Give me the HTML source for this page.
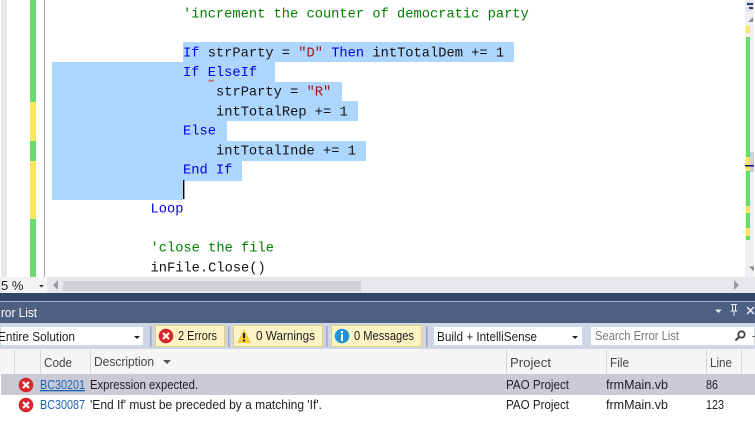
<!DOCTYPE html>
<html><head><meta charset="utf-8"><style>
html,body{margin:0;padding:0;background:#fff;width:755px;height:446px;overflow:hidden}
svg{display:block}
.c{font-family:"Liberation Mono",monospace;font-size:13.72px;white-space:pre}
.k{fill:#0000e6}.g{fill:#008000}.s{fill:#a31515}.t{fill:#111}
.u{font-family:"Liberation Sans",sans-serif;font-size:13px;fill:#1e1e1e}
</style></head><body>
<svg width="755" height="446" viewBox="0 0 755 446" xmlns="http://www.w3.org/2000/svg">
<rect width="755" height="446" fill="#fff"/>
<!-- margin -->
<rect x="1" y="0" width="6" height="277" fill="#e6e6e6"/>
<rect x="30" y="0" width="6" height="102" fill="#66dc6a"/>
<rect x="30" y="102" width="6" height="39" fill="#fde65f"/>
<rect x="30" y="141" width="6" height="20" fill="#66dc6a"/>
<rect x="30" y="161" width="6" height="58" fill="#fde65f"/>
<rect x="30" y="219" width="6" height="58" fill="#66dc6a"/>
<rect x="44" y="0" width="1" height="277" fill="#a5a5a5"/>
<!-- selection -->
<g fill="#add6ff">
<rect x="183" y="42" width="331" height="20"/>
<rect x="52" y="62" width="223" height="20"/>
<rect x="52" y="82" width="290" height="19"/>
<rect x="52" y="101" width="306" height="20"/>
<rect x="52" y="121" width="175" height="20"/>
<rect x="52" y="141" width="314" height="20"/>
<rect x="52" y="161" width="190" height="20"/>
<rect x="52" y="181" width="131" height="19"/>
</g>
<rect x="183" y="180" width="1.4" height="19" fill="#000"/>
<!-- code -->
<text class="c g" x="183" y="17.500">'increment the counter of democratic party</text>
<text class="c" x="183" y="56.500"><tspan class="k">If</tspan><tspan class="t"> strParty = </tspan><tspan class="s">"D"</tspan><tspan class="t"> </tspan><tspan class="k">Then</tspan><tspan class="t"> intTotalDem += 1</tspan></text>
<text class="c k" x="183" y="76">If ElseIf</text>
<path d="M208.5 81.5l1.7-1.5 1.7 1.5 1.7-1.5" fill="none" stroke="#d0483c" stroke-width="1"/>
<text class="c" x="216" y="95.500"><tspan class="t">strParty = </tspan><tspan class="s">"R"</tspan></text>
<text class="c t" x="216" y="115.500">intTotalRep += 1</text>
<text class="c k" x="183" y="134.500">Else</text>
<text class="c t" x="216" y="154.500">intTotalInde += 1</text>
<text class="c k" x="183" y="173.500">End If</text>
<text class="c k" x="150.5" y="212.500">Loop</text>
<text class="c g" x="150.5" y="251.500">'close the file</text>
<text class="c t" x="150.5" y="271.500">inFile.Close()</text>
<!-- right scrollbar -->
<rect x="745" y="0" width="9" height="277" fill="#f0f0f3"/>
<rect x="746" y="1" width="8" height="10" fill="#e0e2ea"/>
<path d="M747 3h6v2h-6zM749 7h4v2h-4z" fill="#2f4368"/>
<path d="M748 22l5-5v5z" fill="#8a8a95"/>
<rect x="746" y="26" width="4" height="7" fill="#fde65f"/>
<rect x="746" y="37" width="4" height="120" fill="#66dc6a"/>
<rect x="750" y="152" width="4" height="20" fill="#d0d1d7"/>
<rect x="746" y="157" width="4" height="14" fill="#fde65f"/>
<rect x="745" y="165" width="9" height="1.500" fill="#10107a"/>
<rect x="746" y="171" width="4" height="35" fill="#66dc6a"/>
<rect x="746" y="206" width="4" height="7" fill="#fde65f"/>
<rect x="746" y="213" width="4" height="15" fill="#66dc6a"/>
<rect x="746" y="228" width="4" height="8" fill="#fde65f"/>
<rect x="746" y="236" width="4" height="4" fill="#66dc6a"/>
<path d="M749 266.5h5v5z" fill="#8a8a95"/>
<!-- bottom scrollbar -->
<rect x="0" y="277" width="755" height="17" fill="#e8e8ec"/>
<rect x="1" y="277" width="46" height="16" fill="#f4f4f6"/>
<text class="u" x="1" y="290">5 %</text>
<path d="M39 285h5l-2.500 2.500z" fill="#333"/>
<path d="M58 280v10l-5-5z" fill="#9a9aa4"/>
<rect x="63" y="281" width="298" height="10" fill="#d0d1d7"/>
<path d="M734 280v10l5-5z" fill="#9a9aa4"/>
<!-- panel -->
<rect x="0" y="293" width="755" height="8" fill="#334669"/>
<rect x="0" y="301" width="755" height="1" fill="#a9b6cd"/>
<rect x="0" y="302" width="755" height="21" fill="#4d6082"/>
<text class="u" x="1" y="317" style="fill:#fff" textLength="36" lengthAdjust="spacingAndGlyphs">ror List</text>
<path d="M715 309.500h7l-3.500 3.500z" fill="#dfe6f2"/>
<path d="M731 304.500h6M732.500 305v6h3v-6M730.500 311h7M734 311v5" fill="none" stroke="#e6ebf5" stroke-width="1"/>
<path d="M747 307l7 7M754 307l-7 7" stroke="#e6ebf5" stroke-width="1.500"/>
<!-- toolbar -->
<rect x="0" y="323" width="755" height="26" fill="#cfd6e5"/>
<rect x="1" y="327" width="142" height="18" fill="#fff"/>
<text class="u" x="-2" y="341" textLength="77" lengthAdjust="spacingAndGlyphs">Entire Solution</text>
<path d="M134 336h6l-3 3z" fill="#222"/>
<rect x="150" y="326" width="1.500" height="21" fill="#9aa7bd"/>
<rect x="155.500" y="325.500" width="69" height="21" fill="#fdf3c5" stroke="#e6cf7a"/>
<circle cx="166" cy="336" r="7.300" fill="#d8262c"/>
<path d="M163 333l6 6M169 333l-6 6" stroke="#fff" stroke-width="2.200"/>
<text class="u" x="178" y="340" textLength="39" lengthAdjust="spacingAndGlyphs">2 Errors</text>
<rect x="228" y="326" width="1.500" height="21" fill="#9aa7bd"/>
<rect x="233.500" y="325.500" width="89" height="21" fill="#fdf3c5" stroke="#e6cf7a"/>
<path d="M244 329l7 14h-14z" fill="#f7c93c"/>
<path d="M243 333h2v5h-2zM243 339.500h2v2h-2z" fill="#222"/>
<text class="u" x="256" y="340" textLength="59" lengthAdjust="spacingAndGlyphs">0 Warnings</text>
<rect x="326" y="326" width="1.500" height="21" fill="#9aa7bd"/>
<rect x="331.500" y="325.500" width="90" height="21" fill="#fdf3c5" stroke="#e6cf7a"/>
<circle cx="342" cy="336" r="7.300" fill="#1e96d8"/>
<path d="M341 331h2v2h-2zM341 334h2v7h-2z" fill="#fff"/>
<text class="u" x="354" y="340" textLength="60" lengthAdjust="spacingAndGlyphs">0 Messages</text>
<rect x="426" y="326" width="1.500" height="21" fill="#9aa7bd"/>
<rect x="434" y="327" width="148" height="18" fill="#fff"/>
<text class="u" x="437" y="341" textLength="100" lengthAdjust="spacingAndGlyphs">Build + IntelliSense</text>
<path d="M572 336h6l-3 3z" fill="#222"/>
<rect x="591" y="327" width="163" height="18" fill="#fff"/>
<text class="u" x="595" y="340" style="fill:#777" textLength="84" lengthAdjust="spacingAndGlyphs">Search Error List</text>
<circle cx="741.500" cy="334.500" r="3.200" fill="none" stroke="#444" stroke-width="1.800"/>
<path d="M739 337l-3.500 3.500" stroke="#444" stroke-width="2"/>
<path d="M752 336h3v1h-2z" fill="#555"/>
<!-- header -->
<rect x="0" y="349" width="755" height="25" fill="#f5f5f5"/>
<g fill="#d3d6de">
<rect x="14" y="350" width="1" height="24"/><rect x="40" y="350" width="1" height="24"/>
<rect x="90" y="350" width="1" height="24"/><rect x="506" y="350" width="1" height="24"/>
<rect x="606" y="350" width="1" height="24"/><rect x="706" y="350" width="1" height="24"/>
<rect x="741" y="350" width="1" height="24"/>
</g>
<text class="u" x="44" y="367" style="fill:#444" textLength="28" lengthAdjust="spacingAndGlyphs">Code</text>
<text class="u" x="94" y="366" style="fill:#444" textLength="60" lengthAdjust="spacingAndGlyphs">Description</text>
<path d="M163 360h8l-4 4z" fill="#555"/>
<text class="u" x="510" y="367" style="fill:#444" textLength="41" lengthAdjust="spacingAndGlyphs">Project</text>
<text class="u" x="610" y="367" style="fill:#444" textLength="19" lengthAdjust="spacingAndGlyphs">File</text>
<text class="u" x="710" y="367" style="fill:#444" textLength="22" lengthAdjust="spacingAndGlyphs">Line</text>
<!-- rows -->
<rect x="1" y="374" width="754" height="21" fill="#c9cad6"/>
<circle cx="26" cy="385" r="7.300" fill="#d8262c"/>
<path d="M23 382l6 6M29 382l-6 6" stroke="#fff" stroke-width="2.200"/>
<circle cx="26" cy="405" r="7.300" fill="#d8262c"/>
<path d="M23 402l6 6M29 402l-6 6" stroke="#fff" stroke-width="2.200"/>
<text class="u" x="40" y="389" style="fill:#1f62b5;text-decoration:underline" textLength="45" lengthAdjust="spacingAndGlyphs">BC30201</text>
<text class="u" x="90" y="389" textLength="108" lengthAdjust="spacingAndGlyphs">Expression expected.</text>
<text class="u" x="506" y="389" textLength="63" lengthAdjust="spacingAndGlyphs">PAO Project</text>
<text class="u" x="606" y="389" textLength="62" lengthAdjust="spacingAndGlyphs">frmMain.vb</text>
<text class="u" x="706" y="389" textLength="12" lengthAdjust="spacingAndGlyphs">86</text>
<text class="u" x="40" y="409" style="fill:#1f62b5" textLength="45" lengthAdjust="spacingAndGlyphs">BC30087</text>
<text class="u" x="90" y="409" textLength="232" lengthAdjust="spacingAndGlyphs">'End If' must be preceded by a matching 'If'.</text>
<text class="u" x="506" y="409" textLength="63" lengthAdjust="spacingAndGlyphs">PAO Project</text>
<text class="u" x="606" y="409" textLength="62" lengthAdjust="spacingAndGlyphs">frmMain.vb</text>
<text class="u" x="706" y="409" textLength="18" lengthAdjust="spacingAndGlyphs">123</text>
</svg>
</body></html>
